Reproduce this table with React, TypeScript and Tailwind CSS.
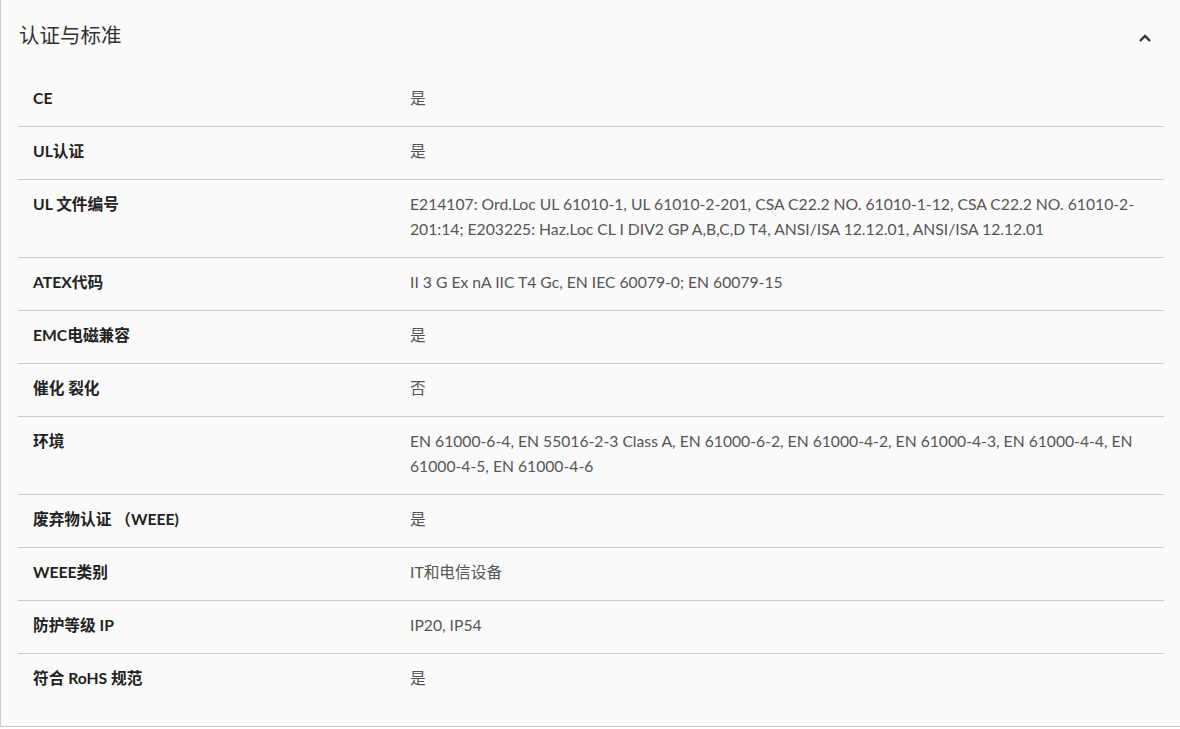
import React from 'react';

const rows: { label: string; value: string }[] = [
  { label: 'CE', value: '是' },
  { label: 'UL认证', value: '是' },
  {
    label: 'UL 文件编号',
    value:
      'E214107: Ord.Loc UL 61010-1, UL 61010-2-201, CSA C22.2 NO. 61010-1-12, CSA C22.2 NO. 61010-2-201:14; E203225: Haz.Loc CL I DIV2 GP A,B,C,D T4, ANSI/ISA 12.12.01, ANSI/ISA 12.12.01',
  },
  { label: 'ATEX代码', value: 'II 3 G Ex nA IIC T4 Gc, EN IEC 60079-0; EN 60079-15' },
  { label: 'EMC电磁兼容', value: '是' },
  { label: '催化 裂化', value: '否' },
  {
    label: '环境',
    value:
      'EN 61000-6-4, EN 55016-2-3 Class A, EN 61000-6-2, EN 61000-4-2, EN 61000-4-3, EN 61000-4-4, EN 61000-4-5, EN 61000-4-6',
  },
  { label: '废弃物认证 （WEEE)', value: '是' },
  { label: 'WEEE类别', value: 'IT和电信设备' },
  { label: '防护等级 IP', value: 'IP20, IP54' },
  { label: '符合 RoHS 规范', value: '是' },
];

const App = () => {
  return (
    <div
      className="w-[1180px] h-[729px] bg-white"
      style={{ fontFamily: 'Lato, "Noto Sans CJK SC", sans-serif' }}
    >
      <section className="h-[727px] bg-[#fafafa] border-l border-b border-[#c3ccd5]">
        {/* Header */}
        <div className="h-[74px] flex items-center justify-between pl-[18px] pr-[28px]">
          <h2 className="text-[20.5px] text-[#333] font-normal pb-[3px]">认证与标准</h2>
          <svg width="14" height="10" viewBox="0 0 14 10" className="mt-[1px]">
            <path d="M2 8 L7 3 L12 8" fill="none" stroke="#333" strokeWidth="2.4" />
          </svg>
        </div>

        {/* Spec table */}
        <div className="ml-[17px] w-[1146px]">
          {rows.map((row, i) => (
            <div
              key={i}
              className={`flex pt-[12px] pb-[15px] leading-[25px] text-[15.7px] ${
                i < rows.length - 1 ? 'border-b border-[#c3ccd5]' : ''
              }`}
            >
              <div className="w-[392px] shrink-0 pl-[15px] font-bold text-[#222]">{row.label}</div>
              <div className="flex-1 pr-[26px] text-[#555]">{row.value}</div>
            </div>
          ))}
        </div>
      </section>
    </div>
  );
};

export default App;
